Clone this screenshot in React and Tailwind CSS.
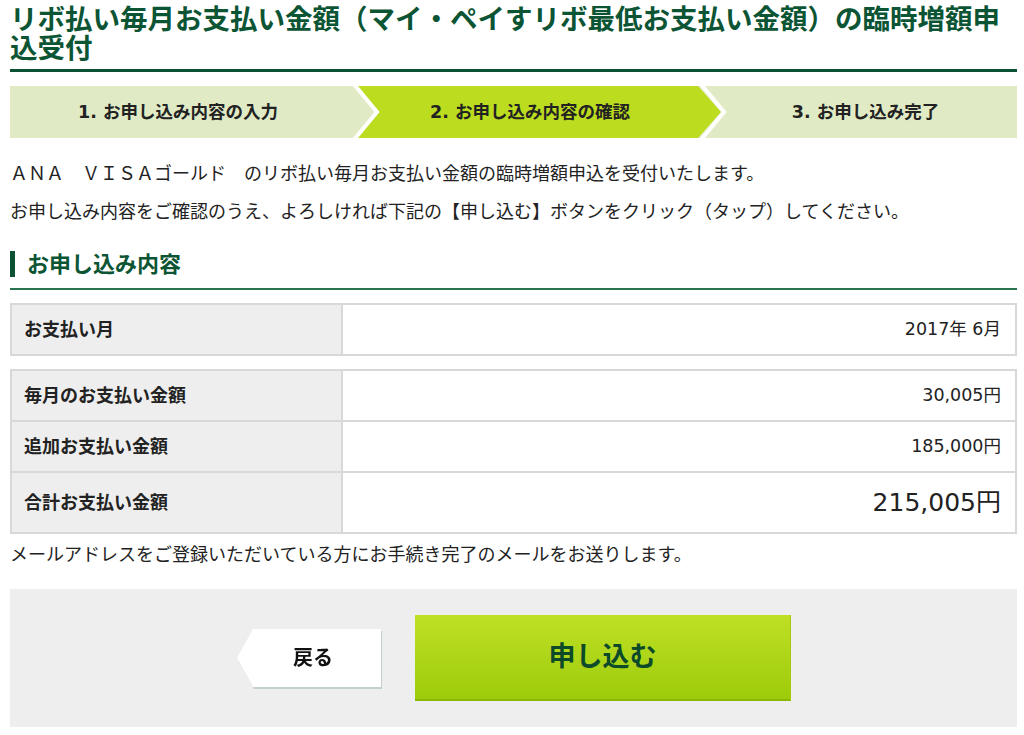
import React from "react";

function StepBar() {
  return (
    <div className="relative mt-[14px] h-[52px] bg-[#e0ebc6]">
      <svg className="absolute inset-0 h-full w-full" viewBox="0 0 1007 52" preserveAspectRatio="none">
        <polygon points="346,0 688,0 711,26 688,52 346,52 369,26" fill="#bcdc1f" />
        <polyline points="343,-3 367,26 343,55" fill="none" stroke="#ffffff" strokeWidth="4" />
        <polyline points="690,-3 714,26 690,55" fill="none" stroke="#ffffff" strokeWidth="4" />
      </svg>
      <div className="relative flex h-full items-center text-[17.5px] font-bold text-[#222]">
        <div className="w-[336px] text-center">1. お申し込み内容の入力</div>
        <div className="w-[368px] text-center">2. お申し込み内容の確認</div>
        <div className="flex-1 text-center">3. お申し込み完了</div>
      </div>
    </div>
  );
}

function Row({ label, value, big, last }) {
  return (
    <div className={`grid grid-cols-[331px_1fr] ${last ? "" : "border-b-2 border-[#d8d8d8]"}`}>
      <div className={`flex items-center border-r-2 border-[#d8d8d8] bg-[#eeeeee] pl-[12px] text-[18px] font-bold text-[#222] ${big ? "h-[59px]" : "h-[49px]"}`}>
        {label}
      </div>
      <div className={`flex items-center justify-end pr-[14px] text-[#222] ${big ? "text-[25px]" : "text-[17.5px]"}`}>
        {value}
      </div>
    </div>
  );
}

export default function App() {
  return (
    <div className="w-[1024px] bg-white pb-[7px] pl-[10px] pr-[7px] font-['DejaVu_Sans','Noto_Sans_CJK_JP',sans-serif] text-[#222]">
      <h1 className="pt-[5px] text-[27.5px] font-bold leading-[29px] text-[#0c5534]">
        リボ払い毎月お支払い金額（マイ・ペイすリボ最低お支払い金額）の臨時増額申込受付
      </h1>
      <div className="mt-[6px] h-[3px] w-full bg-[#0b5233]" />

      <StepBar />

      <p className="mt-[23px] text-[18px] leading-[26px]">
        ＡＮＡ　ＶＩＳＡゴールド　のリボ払い毎月お支払い金額の臨時増額申込を受付いたします。
      </p>
      <p className="mt-[12px] text-[18px] leading-[26px]">
        お申し込み内容をご確認のうえ、よろしければ下記の【申し込む】ボタンをクリック（タップ）してください。
      </p>

      <div className="mt-[26px] border-b-2 border-[#2a7550] pb-[11px]">
        <h2 className="flex h-[26px] items-center border-l-[5px] border-[#0b5233] pl-[12px] text-[22px] font-bold text-[#0c5534]">
          お申し込み内容
        </h2>
      </div>

      <div className="mt-[13px] border-2 border-[#d8d8d8]">
        <Row label="お支払い月" value="2017年 6月" last />
      </div>

      <div className="mt-[13px] border-2 border-[#d8d8d8]">
        <Row label="毎月のお支払い金額" value="30,005円" />
        <Row label="追加お支払い金額" value="185,000円" />
        <Row label="合計お支払い金額" value="215,005円" big last />
      </div>

      <p className="mt-[8px] text-[18px] leading-[26px]">
        メールアドレスをご登録いただいている方にお手続き完了のメールをお送りします。
      </p>

      <div className="mt-[21px] flex h-[138px] items-center justify-center gap-[34px] bg-[#eeeeee]">
        <div className="[filter:drop-shadow(1px_2px_0_#c3d1cc)]">
          <div className="flex h-[58px] w-[144px] items-center justify-center bg-white pl-[8px] text-[20px] font-bold text-[#111] [clip-path:polygon(16px_0,100%_0,100%_100%,16px_100%,0_50%)]">
            戻る
          </div>
        </div>
        <div className="flex h-[86px] w-[375px] items-center justify-center border-b-2 border-[#8ab800] bg-gradient-to-b from-[#bfe024] to-[#9dcb08] text-[27px] font-bold text-[#0c4a2a] shadow-[1px_0_0_#a6c80f]">
          申し込む
        </div>
      </div>
    </div>
  );
}
